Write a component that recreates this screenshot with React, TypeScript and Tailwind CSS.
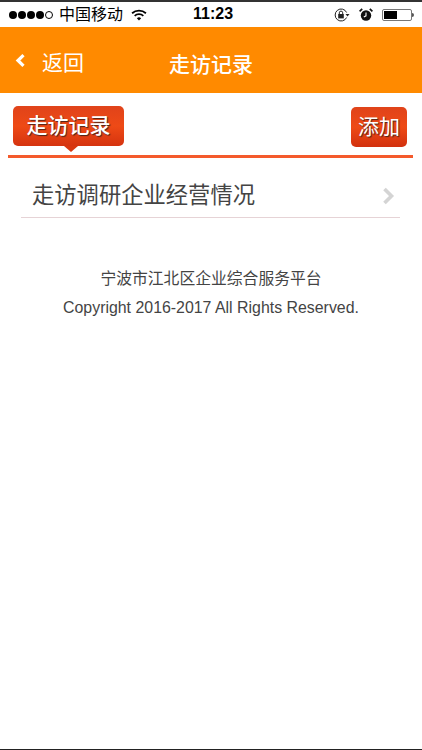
const CJK = "font-['Liberation_Sans','Noto_Sans_CJK_SC',sans-serif]";

function Dots() {
  return (
    <div className="flex items-center gap-[1px]">
      <span className="w-[8px] h-[8px] rounded-full bg-black" />
      <span className="w-[8px] h-[8px] rounded-full bg-black" />
      <span className="w-[8px] h-[8px] rounded-full bg-black" />
      <span className="w-[8px] h-[8px] rounded-full bg-black" />
      <span className="w-[8px] h-[8px] rounded-full border border-black" />
    </div>
  );
}

function Wifi() {
  return (
    <svg width="16" height="12" viewBox="0 0 17 13">
      <path d="M1 4.6 A11 11 0 0 1 16 4.6" fill="none" stroke="#000" strokeWidth="1.9" />
      <path d="M3.8 7.4 A7 7 0 0 1 13.2 7.4" fill="none" stroke="#000" strokeWidth="1.9" />
      <path d="M6.2 9.9 A3.4 3.4 0 0 1 10.8 9.9 L8.5 12.4 Z" fill="#000" />
    </svg>
  );
}

function RotationLock() {
  return (
    <svg width="16" height="14" viewBox="0 0 16 14">
      <path d="M12.6 9.5 A6 6 0 1 1 12.6 4.5" fill="none" stroke="#222" strokeWidth="1" />
      <path d="M11.5 6 L15.5 6 L13.5 8.5 Z" fill="#222" />
      <rect x="4.2" y="6" width="5.6" height="4.4" fill="#222" />
      <path d="M5.3 6 V4.8 A1.7 1.7 0 0 1 8.7 4.8 V6" fill="none" stroke="#222" strokeWidth="1" />
    </svg>
  );
}

function Alarm() {
  return (
    <svg width="14" height="14" viewBox="0 0 14 14">
      <circle cx="7" cy="7.5" r="5.2" fill="#111" />
      <path d="M7 4.5 V7.8 L4.8 9" fill="none" stroke="#fff" strokeWidth="1.1" />
      <path d="M0.6 3.4 L3.2 0.9 M13.4 3.4 L10.8 0.9" stroke="#111" strokeWidth="1.7" />
    </svg>
  );
}

function Battery() {
  return (
    <div className="flex items-center">
      <div className="w-[30px] h-[12px] border border-[#777] rounded-[2px] p-[1px] bg-white">
        <div className="w-[13px] h-full bg-black" />
      </div>
      <div className="w-[2px] h-[4px] bg-[#555] rounded-r-sm" />
    </div>
  );
}

function ChevronRight() {
  return (
    <svg width="13" height="18" viewBox="0 0 13 18">
      <path d="M2.5 2 L9.5 9 L2.5 16" fill="none" stroke="#d4d4d4" strokeWidth="3.6" />
    </svg>
  );
}

function ChevronLeft() {
  return (
    <svg width="11" height="15" viewBox="0 0 11 15">
      <path d="M8.5 2.2 L3 7.5 L8.5 12.8" fill="none" stroke="#fff" strokeWidth="3.2" />
    </svg>
  );
}

export default function App() {
  return (
    <div className={`${CJK} w-[422px] h-[750px] flex flex-col bg-white border-t-2 border-b border-t-[#333] border-b-[#222] overflow-hidden`}>
      <div className="h-[25px] shrink-0 flex items-center justify-between pl-[9px] pr-[8px] relative text-black">
        <div className="flex items-center">
          <Dots />
          <span className="ml-[6px] text-[16px] leading-none">中国移动</span>
          <span className="ml-[8px]"><Wifi /></span>
        </div>
        <span className="absolute left-[193px] top-[2px] text-[16px] leading-[20px] font-semibold">11:23</span>
        <div className="flex items-center gap-[9px]">
          <RotationLock />
          <Alarm />
          <Battery />
        </div>
      </div>

      <div className="h-[66px] shrink-0 bg-[#ff8a00] flex items-center relative text-white text-[21px]">
        <span className="ml-[15px] mt-[1px]"><ChevronLeft /></span>
        <span className="ml-[16px] mt-[6px]">返回</span>
        <span className="absolute left-[169px] top-[22px] leading-[32px] font-medium">走访记录</span>
      </div>

      <div className="ml-[8px] mr-[9px] mt-[13px] h-[52px] shrink-0 border-b-[3px] border-[#f45a2c] flex justify-between items-start relative">
        <div className="ml-[5px] w-[111px] h-[40px] rounded-[5px] bg-gradient-to-b from-[#e0431a] via-[#ee4a16] to-[#d5330f] text-white text-[21px] font-medium flex items-center justify-center [text-shadow:1px_1px_1px_#4a2418]">
          走访记录
        </div>
        <div className="absolute left-[56px] top-[40px] w-0 h-0 border-l-[7px] border-r-[7px] border-t-[6px] border-l-transparent border-r-transparent border-t-[#d8360f]" />
        <div className="mt-[1px] mr-[6px] w-[56px] h-[40px] rounded-[5px] bg-gradient-to-b from-[#e0431a] via-[#ee4a16] to-[#d2300e] text-white text-[21px] flex items-center justify-center [text-shadow:1px_1px_1px_#4a2418]">
          添加
        </div>
      </div>

      <div className="ml-[21px] w-[379px] h-[60px] shrink-0 border-b border-[#e6d3d6] flex items-center justify-between pl-[11px] pr-[5px] pt-[17px]">
        <span className="text-[22.3px] leading-[30px] text-[#444]">走访调研企业经营情况</span>
        <ChevronRight />
      </div>

      <div className="mt-[51px] flex flex-col items-center text-[#444] gap-[9px]">
        <span className="text-[15.8px] leading-[20px]">宁波市江北区企业综合服务平台</span>
        <span className="text-[15.9px] leading-[20px]">Copyright 2016-2017 All Rights Reserved.</span>
      </div>
    </div>
  );
}
